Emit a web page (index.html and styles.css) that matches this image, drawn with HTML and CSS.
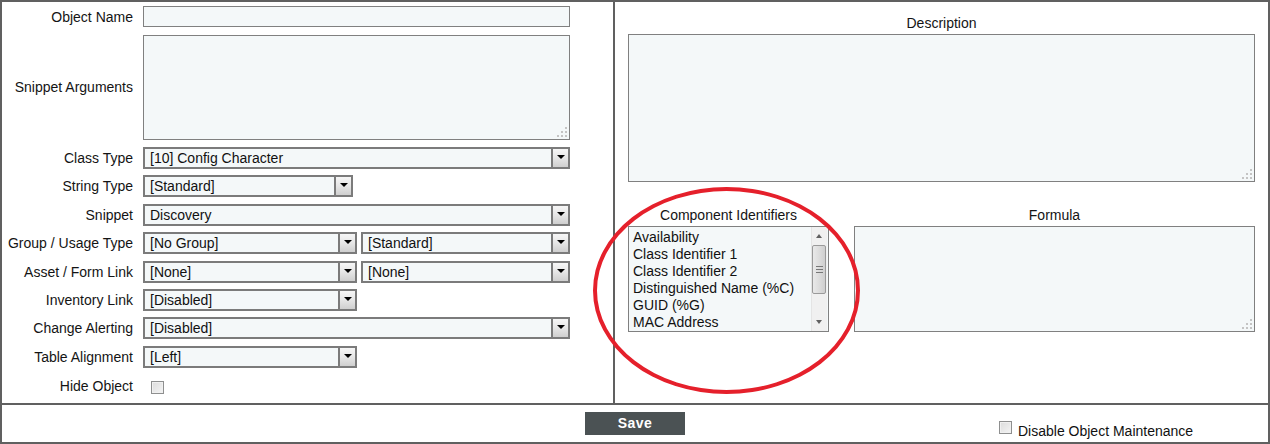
FILE: index.html
```html
<!DOCTYPE html>
<html>
<head>
<meta charset="utf-8">
<link rel="stylesheet" href="styles.css">
</head>
<body>
<div class="frame">
  <div class="top">
    <div class="left">
      <div class="form">
        <div class="lbl">Object Name</div>
        <div class="field"><div class="input"></div></div>

        <div class="lbl">Snippet Arguments</div>
        <div class="field tall"><div class="ta ta-args"></div></div>

        <div class="lbl">Class Type</div>
        <div class="field"><div class="select full"><span class="val">[10] Config Character</span><span class="arrow"></span></div></div>

        <div class="lbl">String Type</div>
        <div class="field"><div class="select narrow"><span class="val">[Standard]</span><span class="arrow"></span></div></div>

        <div class="lbl">Snippet</div>
        <div class="field"><div class="select full"><span class="val">Discovery</span><span class="arrow"></span></div></div>

        <div class="lbl">Group / Usage Type</div>
        <div class="field pair">
          <div class="select short"><span class="val">[No Group]</span><span class="arrow"></span></div>
          <div class="select grow"><span class="val">[Standard]</span><span class="arrow"></span></div>
        </div>

        <div class="lbl">Asset / Form Link</div>
        <div class="field pair">
          <div class="select short"><span class="val">[None]</span><span class="arrow"></span></div>
          <div class="select grow"><span class="val">[None]</span><span class="arrow"></span></div>
        </div>

        <div class="lbl">Inventory Link</div>
        <div class="field"><div class="select short"><span class="val">[Disabled]</span><span class="arrow"></span></div></div>

        <div class="lbl">Change Alerting</div>
        <div class="field"><div class="select full"><span class="val">[Disabled]</span><span class="arrow"></span></div></div>

        <div class="lbl">Table Alignment</div>
        <div class="field"><div class="select short"><span class="val">[Left]</span><span class="arrow"></span></div></div>

        <div class="lbl">Hide Object</div>
        <div class="field"><span class="check check-hide"></span></div>
      </div>
    </div>

    <div class="right">
      <div class="cap cap-desc">Description</div>
      <div class="ta ta-desc"></div>

      <div class="lower">
        <div class="col">
          <div class="cap">Component Identifiers</div>
          <div class="listbox">
            <ul class="items">
              <li>Availability</li>
              <li>Class Identifier 1</li>
              <li>Class Identifier 2</li>
              <li>Distinguished Name (%C)</li>
              <li>GUID (%G)</li>
              <li>MAC Address</li>
            </ul>
            <div class="sbar">
              <span class="sb-up"></span>
              <span class="sb-thumb"><span class="grip"></span></span>
              <span class="sb-down"></span>
            </div>
          </div>
        </div>
        <div class="col">
          <div class="cap">Formula</div>
          <div class="ta ta-formula"></div>
        </div>
      </div>
    </div>
  </div>

  <div class="bottom">
    <div></div>
    <div class="save">Save</div>
    <div class="dom"><span class="check"></span><span class="dom-text">Disable Object Maintenance</span></div>
  </div>

  <div class="annot"></div>
</div>
</body>
</html>
```

FILE: styles.css
```css
html, body {
  margin: 0;
  padding: 0;
  background: #ffffff;
}

body {
  font-family: "Liberation Sans", Arial, sans-serif;
  font-size: 14px;
  color: #141414;
}

.frame {
  position: relative;
  width: 1270px;
  height: 444px;
  box-sizing: border-box;
  border: 2px solid #606060;
  display: flex;
  flex-direction: column;
}

.top {
  display: grid;
  grid-template-columns: 613px 653px;
  height: 403px;
  box-sizing: border-box;
  border-bottom: 2px solid #606060;
}

.left {
  border-right: 2px solid #606060;
}

/* ---------- left form ---------- */
.form {
  display: grid;
  grid-template-columns: 131px 427px;
  grid-template-rows: 21px 107px repeat(8, 22px) 24px;
  column-gap: 10px;
  row-gap: 6.43px;
  padding-top: 4px;
}

.lbl {
  text-align: right;
  align-self: center;
  white-space: nowrap;
  line-height: 16px;
}

.field {
  display: flex;
  align-items: center;
  min-width: 0;
}

.field.tall {
  align-items: flex-end;
}

.field.pair {
  gap: 4px;
}

.input {
  width: 427px;
  height: 21px;
  box-sizing: border-box;
  border: 1px solid #808080;
  background: #f4f8f9;
}

.ta {
  position: relative;
  box-sizing: border-box;
  border: 1px solid #808080;
  background: #f4f8f9;
}

.ta::after {
  content: "";
  position: absolute;
  right: 2px;
  bottom: 2px;
  width: 10px;
  height: 10px;
  background-image: url("data:image/svg+xml,%3Csvg xmlns='http://www.w3.org/2000/svg' width='10' height='10'%3E%3Cg fill='%23c4c4c4'%3E%3Crect x='8' y='0' width='2' height='2'/%3E%3Crect x='4' y='4' width='2' height='2'/%3E%3Crect x='8' y='4' width='2' height='2'/%3E%3Crect x='0' y='8' width='2' height='2'/%3E%3Crect x='4' y='8' width='2' height='2'/%3E%3Crect x='8' y='8' width='2' height='2'/%3E%3C/g%3E%3C/svg%3E");
}

.ta-args {
  width: 427px;
  height: 105px;
}

.select {
  display: flex;
  align-items: stretch;
  height: 22px;
  box-sizing: border-box;
  border: 2px solid #7b7b7b;
  background: #f4f8f9;
}

.select.full { width: 427px; }
.select.short { width: 214px; }
.select.narrow { width: 210px; }
.select.grow { flex: 1; }

.select .val {
  flex: 1;
  padding-left: 5px;
  line-height: 19px;
  white-space: nowrap;
  overflow: hidden;
  color: #111;
}

.select .arrow {
  position: relative;
  width: 15px;
  border-left: 2px solid #7b7b7b;
  background: linear-gradient(#f6f6f6, #e6e6e6 50%, #cfcfcf);
}

.select .arrow::before {
  content: "";
  position: absolute;
  left: 4px;
  top: 6px;
  border-left: 4px solid transparent;
  border-right: 4px solid transparent;
  border-top: 4px solid #000;
}

.check {
  display: inline-block;
  flex: none;
  width: 13px;
  height: 13px;
  box-sizing: border-box;
  border: 1px solid #8e8f8f;
  background: linear-gradient(135deg, #dcdcdc, #f4f4f4);
  box-shadow: inset 0 0 0 1px #f0f0f0;
}

.check-hide {
  margin-left: 8px;
  margin-top: 2px;
}

/* ---------- right panel ---------- */
.right {
  padding: 13px 13px 0 13px;
  display: flex;
  flex-direction: column;
}

.cap {
  text-align: center;
  line-height: 16px;
  white-space: nowrap;
}

.ta-desc {
  margin-top: 3px;
  height: 148px;
}

.lower {
  margin-top: 25px;
  display: grid;
  grid-template-columns: 201px 401px;
  column-gap: 25px;
}

.col .cap {
  margin-bottom: 3px;
}

.ta-formula {
  height: 106px;
}

.listbox {
  display: flex;
  height: 106px;
  box-sizing: border-box;
  border: 1px solid #808080;
  background: #f4f8f9;
  overflow: hidden;
}

.items {
  flex: 1;
  list-style: none;
  margin: 0;
  padding: 2px 0 0 4px;
  line-height: 17px;
  white-space: nowrap;
  overflow: hidden;
}

.items li {
  color: #111;
}

.sbar {
  position: relative;
  width: 15px;
  margin-right: 1px;
  background: #f0f0f0;
  border-left: 1px solid #e4e4e4;
}

.sb-up, .sb-down {
  position: absolute;
  left: 4px;
  width: 0;
  height: 0;
  border-left: 3.5px solid transparent;
  border-right: 3.5px solid transparent;
}

.sb-up {
  top: 7px;
  border-bottom: 4px solid #606060;
}

.sb-down {
  bottom: 7px;
  border-top: 4px solid #606060;
}

.sb-thumb {
  position: absolute;
  left: 0;
  top: 18px;
  width: 14px;
  height: 49px;
  box-sizing: border-box;
  border: 1px solid #9a9a9a;
  border-radius: 2px;
  background: linear-gradient(90deg, #e9e9e9, #dadada 60%, #cfcfcf);
}

.grip {
  position: absolute;
  left: 3px;
  top: 20px;
  width: 7px;
  height: 7px;
  background: repeating-linear-gradient(#777 0 1px, transparent 1px 3px);
}

/* ---------- bottom bar ---------- */
.bottom {
  flex: 1;
  display: grid;
  grid-template-columns: 1fr auto 1fr;
  align-items: start;
}

.save {
  margin-top: 7px;
  width: 100px;
  height: 23px;
  box-sizing: border-box;
  background: #4b5254;
  color: #ffffff;
  font-weight: bold;
  font-size: 14px;
  letter-spacing: 0.5px;
  line-height: 23px;
  text-align: center;
}

.dom {
  display: flex;
  align-items: flex-start;
  gap: 6px;
  margin-left: 314px;
  margin-top: 16px;
  white-space: nowrap;
}

.dom-text {
  font-size: 14px;
  line-height: 16px;
  margin-top: 2px;
  color: #111;
}

/* ---------- annotation ---------- */
.annot {
  position: absolute;
  left: 591px;
  top: 185px;
  width: 267px;
  height: 207px;
  box-sizing: border-box;
  border: 4px solid #e5202b;
  border-radius: 50%;
  pointer-events: none;
}
```
